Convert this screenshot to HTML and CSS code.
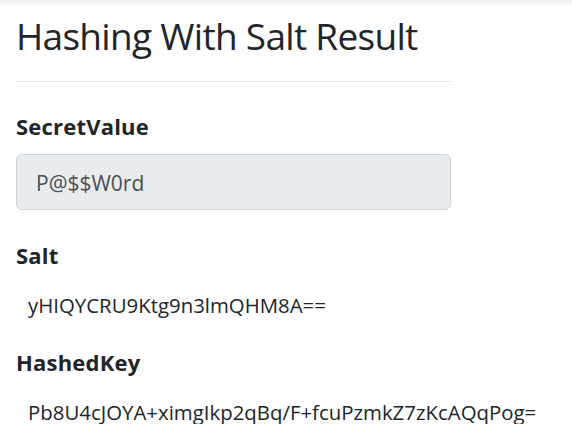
FILE: index.html
```html
<!DOCTYPE html>
<html lang="en">
<head>
<meta charset="utf-8">
<title>Hashing With Salt Result</title>
<link rel="stylesheet" href="styles.css">
</head>
<body>
<div class="topbar"></div>
<main class="page">
  <h1 class="title">Hashing With Salt Result</h1>
  <hr class="rule">
  <div class="field">
    <div class="label">SecretValue</div>
    <div class="input">P@$$W0rd</div>
  </div>
  <div class="field">
    <div class="label">Salt</div>
    <div class="value">yHIQYCRU9Ktg9n3lmQHM8A==</div>
  </div>
  <div class="field">
    <div class="label">HashedKey</div>
    <div class="value">Pb8U4cJOYA+ximgIkp2qBq/F+fcuPzmkZ7zKcAQqPog=</div>
  </div>
</main>
</body>
</html>
```
FILE: styles.css
```css
html, body { margin: 0; padding: 0; background: #fff; }
body { font-family: "Open Sans", "Noto Sans", sans-serif; color: #212529; }
.topbar { height: 5px; background: linear-gradient(#f3f3f3, #fafafa); }
.page { width: 435px; padding: 0 16px; }
.title {
  margin: 9px 0 0;
  font-size: 37px;
  line-height: 44px;
  font-weight: 400;
  letter-spacing: -0.7px;
  white-space: nowrap;
}
.rule { margin: 23px 0 0; border: 0; border-top: 1px solid #e6e6e6; height: 0; }
.field { display: flex; flex-direction: column; }
.label {
  font-size: 22px;
  line-height: 24px;
  font-weight: 700;
  letter-spacing: 0.2px;
  margin-top: 32px;
}
.field + .field .label { margin-top: 33px; }
.input {
  margin-top: 16px;
  height: 51px;
  padding: 3px 19px 0;
  font-size: 21px;
  line-height: 51px;
  color: #495057;
  background: #e9ecef;
  border: 1px solid #ced4da;
  border-radius: 6px;
}
.value {
  margin-top: 26px;
  padding-left: 12px;
  font-size: 20.4px;
  line-height: 24px;
  white-space: nowrap;
}
```
